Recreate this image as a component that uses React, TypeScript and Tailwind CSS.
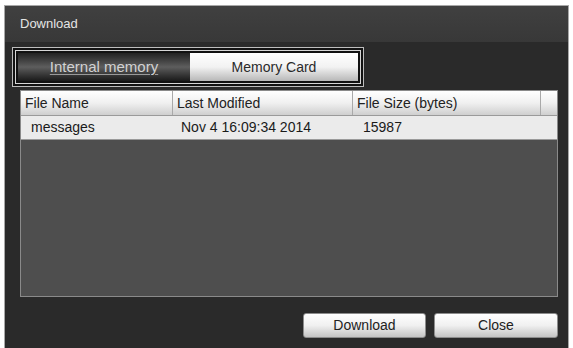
import React from "react";

const columns = [
  { label: "File Name", width: "w-[152px]" },
  { label: "Last Modified", width: "w-[180px]" },
  { label: "File Size (bytes)", width: "w-[188px]" },
];

const files = [{ name: "messages", modified: "Nov 4 16:09:34 2014", size: "15987" }];

const App: React.FC = () => {
  return (
    <div
      className="min-h-screen bg-white pt-[5px] px-[4px] overflow-hidden"
      style={{ fontFamily: '"Liberation Sans", Arial, sans-serif' }}
    >
      <div className="h-[343px] border border-b-0 border-[#a8a8a8] bg-[#2a2a2a]">
        {/* Title bar */}
        <div className="h-[36px] bg-gradient-to-b from-[#404040] to-[#383838] px-[15px] flex items-center text-[13px] text-[#e4e4e4]">
          Download
        </div>

        {/* Body */}
        <div className="pt-[5px]">
          {/* Storage tabs */}
          <div className="ml-[7px] w-[352px] h-[40px] border border-[#bdbdbd] bg-[#121212] p-[2px]">
            <div className="h-full border border-[#d6d6d6] flex p-[2px]">
              <button className="w-[172px] h-full bg-gradient-to-b from-[#222] via-[#5e5e5e] to-[#1a1a1a] text-[15px] text-[#d2d2d2] underline decoration-[#9a9a9a] underline-offset-2 flex items-center justify-center">
                Internal memory
              </button>
              <button className="flex-1 h-full bg-gradient-to-b from-white via-[#f2f2f2] to-[#b8b8b8] text-[14px] text-[#2a2a2a] flex items-center justify-center">
                Memory Card
              </button>
            </div>
          </div>

          {/* File table */}
          <div className="mt-[3px] ml-[15px] w-[538px] h-[207px] border border-[#8a8a8a] bg-[#4e4e4e]">
            <div className="h-[25px] flex bg-gradient-to-b from-white via-[#f0f0f0] to-[#cfcfcf] border-b border-[#9a9a9a] text-[14px] text-[#222]">
              {columns.map((c) => (
                <div
                  key={c.label}
                  className={`${c.width} h-full flex items-center pl-[4px] border-r border-[#a9a9a9]`}
                >
                  {c.label}
                </div>
              ))}
              <div className="flex-1" />
            </div>
            {files.map((f) => (
              <div
                key={f.name}
                className="h-[24px] flex items-center bg-[#ebebeb] border-b border-[#9a9a9a] text-[14px] text-[#1a1a1a]"
              >
                <div className="w-[152px] pl-[10px]">{f.name}</div>
                <div className="w-[180px] pl-[8px]">{f.modified}</div>
                <div className="w-[188px] pl-[10px]">{f.size}</div>
              </div>
            ))}
          </div>

          {/* Actions */}
          <div className="mt-[16px] flex justify-end gap-[8px] pr-[10px]">
            <button className="w-[123px] h-[25px] rounded-[3px] border border-[#8c8c8c] bg-gradient-to-b from-white via-[#f0f0f0] to-[#c4c4c4] text-[14px] text-[#222] flex items-center justify-center">
              Download
            </button>
            <button className="w-[124px] h-[25px] rounded-[3px] border border-[#8c8c8c] bg-gradient-to-b from-white via-[#f0f0f0] to-[#c4c4c4] text-[14px] text-[#222] flex items-center justify-center">
              Close
            </button>
          </div>
        </div>
      </div>
    </div>
  );
};

export default App;
